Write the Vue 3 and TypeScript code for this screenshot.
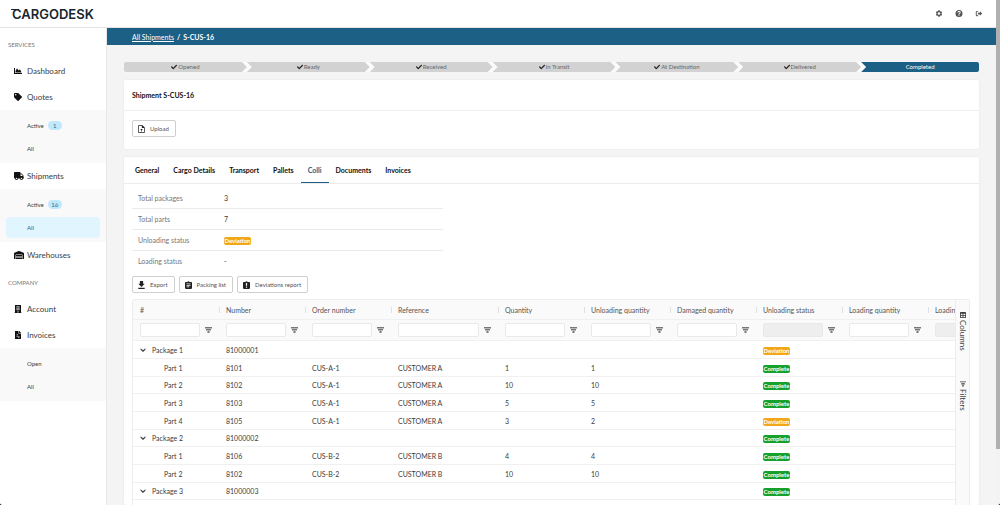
<script setup lang="ts">
import { h, ref } from 'vue'

interface Glyph {
  box: string
  d: string
}

const glyphs: Record<string, Glyph> = {
  chart: {
    box: '0 0 512 512',
    d: 'M500 384c6.6 0 12 5.4 12 12v40c0 6.6-5.4 12-12 12H12c-6.6 0-12-5.4-12-12V76c0-6.6 5.4-12 12-12h40c6.6 0 12 5.4 12 12v308h436zM372.7 159.5L288 216l-85.3-113.7c-5.1-6.8-15.5-6.3-19.9 1L96 248v104h384l-89.9-187.8c-3.2-6.5-11.4-8.7-17.4-4.7z',
  },
  tag: {
    box: '0 0 512 512',
    d: 'M0 252.118V48C0 21.49 21.49 0 48 0h204.118a48 48 0 0 1 33.941 14.059l211.882 211.882c18.745 18.745 18.745 49.137 0 67.882L293.823 497.941c-18.745 18.745-49.137 18.745-67.882 0L14.059 286.059A48 48 0 0 1 0 252.118zM112 64c-26.51 0-48 21.49-48 48s21.49 48 48 48 48-21.49 48-48-21.49-48-48-48z',
  },
  truck: {
    box: '0 0 640 512',
    d: 'M624 352h-16V243.9c0-12.7-5.1-24.9-14.1-33.9L494 110.1c-9-9-21.2-14.1-33.9-14.1H416V48c0-26.500-21.500-48-48-48H48C21.500 0 0 21.500 0 48v320c0 26.500 21.500 48 48 48h16c0 53 43 96 96 96s96-43 96-96h128c0 53 43 96 96 96s96-43 96-96h48c8.800 0 16-7.200 16-16v-32c0-8.800-7.200-16-16-16zM160 464c-26.500 0-48-21.500-48-48s21.500-48 48-48 48 21.500 48 48-21.500 48-48 48zm320 0c-26.500 0-48-21.500-48-48s21.500-48 48-48 48 21.500 48 48-21.500 48-48 48zm80-208H416V144h44.100l99.900 99.900V256z',
  },
  warehouse: {
    box: '0 0 640 512',
    d: 'M504 352H136a8 8 0 0 0-8 8v48a8 8 0 0 0 8 8h368a8 8 0 0 0 8-8v-48a8 8 0 0 0-8-8zm0 96H136a8 8 0 0 0-8 8v48a8 8 0 0 0 8 8h368a8 8 0 0 0 8-8v-48a8 8 0 0 0-8-8zm0-192H136a8 8 0 0 0-8 8v48a8 8 0 0 0 8 8h368a8 8 0 0 0 8-8v-48a8 8 0 0 0-8-8zm106-139L338 4a48 48 0 0 0-37 0L29 117a48 48 0 0 0-29 44v343a8 8 0 0 0 8 8h80a8 8 0 0 0 8-8V256c0-18 15-32 33-32h382c18 0 33 14 33 32v248a8 8 0 0 0 8 8h80a8 8 0 0 0 8-8V161a48 48 0 0 0-30-44z',
  },
  building: {
    box: '0 0 448 512',
    d: 'M436 480h-20V24c0-13-11-24-24-24H56C43 0 32 11 32 24v456H12c-7 0-12 5-12 12v20h448v-20c0-7-5-12-12-12zM128 76h80v64h-80zM240 76h80v64h-80zM128 176h80v64h-80zM240 176h80v64h-80zM128 276h80v64h-80zM240 276h80v64h-80zM192 400h64v80h-64z',
  },
  invoice: {
    box: '0 0 384 512',
    d: 'M224 136V0H24C11 0 0 11 0 24v464c0 13 11 24 24 24h336c13 0 24-11 24-24V160H248c-13 0-24-11-24-24zm160-14v6H256V0h6c6 0 12 3 17 7l98 98c4 5 7 11 7 17zM96 230h110v44H96zM96 330h192v44H96zM190 410h98v44h-98z',
  },
  check: {
    box: '0 0 512 512',
    d: 'M173.898 439.404l-166.400-166.400c-9.997-9.997-9.997-26.206 0-36.204l36.203-36.204c9.997-9.998 26.207-9.998 36.204 0L192 312.690 432.095 72.596c9.997-9.997 26.207-9.997 36.204 0l36.203 36.204c9.997 9.997 9.997 26.206 0 36.204l-294.400 294.401c-9.998 9.997-26.207 9.997-36.204-.001z',
  },
  settings: {
    box: '1 1 22 22',
    d: 'M12 1.500l3 .9.700 2.400 1.500.9 2.500-.6 2.100 3.700-1.800 1.900v2.600l1.800 1.900-2.100 3.700-2.500-.6-1.500.9-.7 2.400-3 .8-3-.8-.7-2.400-1.500-.9-2.500.6-2.100-3.700L4 13.300v-2.600L2.200 8.800l2.100-3.700 2.500.6 1.500-.9.700-2.400zM12 8a4 4 0 1 0 0 8 4 4 0 0 0 0-8z',
  },
  help: {
    box: '1 1 22 22',
    d: 'M12 1a11 11 0 1 0 0 22 11 11 0 0 0 0-22zm1.500 18h-3v-3h3zm2.700-7.600c-1.500 1.400-2.700 1.600-2.700 3.600h-3c0-3 1.500-3.600 2.700-4.800 1.700-1.600.8-3.200-1.200-3.200-1.300 0-2.200.9-2.200 2.200H6.900C6.900 6.200 9.100 4.200 12 4.200c4.600 0 6.800 4.300 4.200 7.200z',
  },
  logout: {
    box: '0 0 24 24',
    d: 'M9 3H5a4 4 0 0 0-4 4v10a4 4 0 0 0 4 4h4v-3H5.500a1.500 1.500 0 0 1-1.500-1.500v-9A1.500 1.500 0 0 1 5.500 6H9zM15 4l8 8-8 8v-5H8V9h7z',
  },
  upload: {
    box: '3 1 18 22',
    d: 'M14 1H5a2 2 0 0 0-2 2v18a2 2 0 0 0 2 2h14a2 2 0 0 0 2-2V8zm5 20H5V3h8v6h6zM8 15h3v4h2v-4h3l-4-4z',
  },
  download: { box: '4 2 16 20', d: 'M20 9h-4V2H8v7H4l8 8zM4 19v3h16v-3z' },
  list: {
    box: '3 1 18 20',
    d: 'M19 3h-4.200a3 3 0 0 0-5.600 0H5a2 2 0 0 0-2 2v14c0 1.100.9 2 2 2h14a2 2 0 0 0 2-2V5a2 2 0 0 0-2-2zm-5 14H7v-2h7zm3-4H7v-2h10zm0-4H7V7h10z',
  },
  late: {
    box: '3 1 18 20',
    d: 'M19 3h-4.200a3 3 0 0 0-5.600 0H5a2 2 0 0 0-2 2v14c0 1.100.9 2 2 2h14a2 2 0 0 0 2-2V5a2 2 0 0 0-2-2zm-5.500 15h-3v-3h3zm0-5h-3V6h3z',
  },
  funnel: { box: '0 0 14 12', d: 'M0 0h14v3H0zM2 4h10v3H2zM5 8h4v4H5z' },
  chevron: { box: '0 0 10 10', d: 'M1 2l4 3.500L9 2v2.500L5 8.500 1 4.500z' },
  columns: {
    box: '0 0 14 14',
    d: 'M2 0h10a2 2 0 0 1 2 2v10a2 2 0 0 1-2 2H2a2 2 0 0 1-2-2V2a2 2 0 0 1 2-2zM2 4v3h4V4zM8 4v3h4V4zM2 9v3h4V9zM8 9v3h4V9z',
  },
  lines: { box: '0 0 14 14', d: 'M0 1h14v2H0zM3 5h8v3H3zM5 10h4v3H5z' },
}

const Icon = (props: { name: string }) =>
  h('svg', { viewBox: glyphs[props.name].box, 'aria-hidden': 'true' }, [
    h('path', { d: glyphs[props.name].d, fill: 'currentColor', 'fill-rule': 'evenodd' }),
  ])
Icon.props = ['name']

interface SubLink {
  label: string
  count?: number
  current?: boolean
}
interface NavItem {
  label: string
  icon: string
  links?: SubLink[]
}

const sections: { title: string; items: NavItem[] }[] = [
  {
    title: 'SERVICES',
    items: [
      { label: 'Dashboard', icon: 'chart' },
      { label: 'Quotes', icon: 'tag', links: [{ label: 'Active', count: 1 }, { label: 'All' }] },
      {
        label: 'Shipments',
        icon: 'truck',
        links: [{ label: 'Active', count: 16 }, { label: 'All', current: true }],
      },
      { label: 'Warehouses', icon: 'warehouse' },
    ],
  },
  {
    title: 'COMPANY',
    items: [
      { label: 'Account', icon: 'building' },
      { label: 'Invoices', icon: 'invoice', links: [{ label: 'Open' }, { label: 'All' }] },
    ],
  },
]

const steps = ['Opened', 'Ready', 'Received', 'In Transit', 'At Destination', 'Delivered', 'Completed']
const tabs = ['General', 'Cargo Details', 'Transport', 'Pallets', 'Colli', 'Documents', 'Invoices']
const activeTab = ref('Colli')

const columns = [
  { label: '#' },
  { label: 'Number' },
  { label: 'Order number' },
  { label: 'Reference', wide: true },
  { label: 'Quantity' },
  { label: 'Unloading quantity' },
  { label: 'Damaged quantity' },
  { label: 'Unloading status', locked: true },
  { label: 'Loading quantity' },
  { label: 'Loading status', locked: true },
]

interface Row {
  name: string
  number: string
  order?: string
  reference?: string
  quantity?: number
  unloaded?: number
  status: 'Deviation' | 'Complete'
}

const rows: Row[] = [
  { name: 'Package 1', number: '81000001', status: 'Deviation' },
  { name: 'Part 1', number: '8101', order: 'CUS-A-1', reference: 'CUSTOMER A', quantity: 1, unloaded: 1, status: 'Complete' },
  { name: 'Part 2', number: '8102', order: 'CUS-A-1', reference: 'CUSTOMER A', quantity: 10, unloaded: 10, status: 'Complete' },
  { name: 'Part 3', number: '8103', order: 'CUS-A-1', reference: 'CUSTOMER A', quantity: 5, unloaded: 5, status: 'Complete' },
  { name: 'Part 4', number: '8105', order: 'CUS-A-1', reference: 'CUSTOMER A', quantity: 3, unloaded: 2, status: 'Deviation' },
  { name: 'Package 2', number: '81000002', status: 'Complete' },
  { name: 'Part 1', number: '8106', order: 'CUS-B-2', reference: 'CUSTOMER B', quantity: 4, unloaded: 4, status: 'Complete' },
  { name: 'Part 2', number: '8102', order: 'CUS-B-2', reference: 'CUSTOMER B', quantity: 10, unloaded: 10, status: 'Complete' },
  { name: 'Package 3', number: '81000003', status: 'Complete' },
]
</script>

<template>
  <div class="window">
    <div class="app">
      <header class="top">
        <a class="logo" href="#"><span class="logo-bar"></span>CARGODESK</a>
        <div class="tools">
          <button type="button" aria-label="Settings"><Icon name="settings" /></button>
          <button type="button" aria-label="Help"><Icon name="help" /></button>
          <button type="button" aria-label="Log out"><Icon name="logout" /></button>
        </div>
      </header>

      <div class="body">
        <nav class="side">
          <template v-for="section in sections" :key="section.title">
            <h2 class="side-title">{{ section.title }}</h2>
            <template v-for="item in section.items" :key="item.label">
              <a class="side-item" href="#">
                <span class="side-icon"><Icon :name="item.icon" :class="item.icon" /></span>{{ item.label }}
              </a>
              <div v-if="item.links" class="side-sub">
                <a
                  v-for="link in item.links"
                  :key="link.label"
                  href="#"
                  class="sub-link"
                  :class="{ current: link.current }"
                >
                  {{ link.label }}<span v-if="link.count" class="count">{{ link.count }}</span>
                </a>
              </div>
            </template>
          </template>
        </nav>

        <main class="main">
          <div class="crumbs">
            <a href="#">All Shipments</a><span>/</span><span>S-CUS-16</span>
          </div>

          <div class="content">
            <ol class="steps">
              <li v-for="(step, i) in steps" :key="step" :class="{ done: i < steps.length - 1 }">
                <Icon v-if="i < steps.length - 1" name="check" class="tick" />{{ step }}
              </li>
            </ol>

            <section class="card">
              <h1 class="card-title">Shipment S-CUS-16</h1>
              <div class="card-body">
                <button type="button" class="btn"><Icon name="upload" />Upload</button>
              </div>
            </section>

            <section class="card grow">
              <div class="tabs" role="tablist">
                <button
                  v-for="tab in tabs"
                  :key="tab"
                  type="button"
                  role="tab"
                  :aria-selected="tab === activeTab"
                  :class="{ active: tab === activeTab }"
                  @click="activeTab = tab"
                >
                  {{ tab }}
                </button>
              </div>

              <div class="panel">
                <dl class="facts">
                  <div><dt>Total packages</dt><dd>3</dd></div>
                  <div><dt>Total parts</dt><dd>7</dd></div>
                  <div><dt>Unloading status</dt><dd><span class="badge deviation">Deviation</span></dd></div>
                  <div><dt>Loading status</dt><dd>-</dd></div>
                </dl>

                <div class="actions">
                  <button type="button" class="btn"><Icon name="download" />Export</button>
                  <button type="button" class="btn"><Icon name="list" />Packing list</button>
                  <button type="button" class="btn"><Icon name="late" />Deviations report</button>
                </div>

                <div class="grid">
                  <div class="grid-view">
                    <table>
                      <colgroup>
                        <col v-for="col in columns" :key="col.label" :class="{ wide: col.wide }" />
                      </colgroup>
                      <thead>
                        <tr class="heads">
                          <th v-for="col in columns" :key="col.label" scope="col"><span>{{ col.label }}</span></th>
                        </tr>
                        <tr class="filters">
                          <td v-for="col in columns" :key="col.label">
                            <div class="filter">
                              <input type="text" :aria-label="`Filter ${col.label}`" :disabled="col.locked" />
                              <button type="button" :aria-label="`Filter options for ${col.label}`">
                                <Icon name="funnel" />
                              </button>
                            </div>
                          </td>
                        </tr>
                      </thead>
                      <tbody>
                        <tr v-for="(row, i) in rows" :key="i">
                          <td>
                            <button v-if="!row.order" type="button" class="toggle">
                              <Icon name="chevron" />{{ row.name }}
                            </button>
                            <span v-else class="part">{{ row.name }}</span>
                          </td>
                          <td>{{ row.number }}</td>
                          <td>{{ row.order }}</td>
                          <td>{{ row.reference }}</td>
                          <td>{{ row.quantity }}</td>
                          <td>{{ row.unloaded }}</td>
                          <td></td>
                          <td><span class="badge" :class="row.status.toLowerCase()">{{ row.status }}</span></td>
                          <td></td>
                          <td></td>
                        </tr>
                      </tbody>
                    </table>
                  </div>
                  <div class="grid-side">
                    <button type="button"><Icon name="columns" />Columns</button>
                    <button type="button"><Icon name="lines" />Filters</button>
                  </div>
                </div>
              </div>
            </section>
          </div>
        </main>
      </div>
    </div>
    <div class="scroll"><div class="thumb"></div></div>
  </div>
</template>

<style>
body {
  background: #1b1b1b;
}
</style>

<style scoped>
* {
  box-sizing: border-box;
}
.window {
  display: flex;
  height: 100vh;
  overflow: hidden;
  border-radius: 0 0 3px 3px;
  background: #f4f4f4;
  color: #3c3c3c;
  font: 7px/10px Lato, 'Liberation Sans', sans-serif;
}
button {
  display: flex;
  align-items: center;
  margin: 0;
  padding: 0;
  border: 0;
  background: none;
  color: inherit;
  font: inherit;
  white-space: nowrap;
}
a {
  color: inherit;
  text-decoration: none;
}
svg {
  display: block;
  flex: none;
}
.app {
  display: flex;
  flex: 1;
  flex-direction: column;
  min-width: 0;
}
.scroll {
  flex: none;
  width: 4px;
  background: #f3f3f3;
}
.thumb {
  height: 89%;
  background: #b0b0b0;
}

.top {
  display: flex;
  flex: none;
  align-items: center;
  justify-content: space-between;
  height: 28px;
  padding: 0 13px 0 12px;
  border-bottom: 1px solid #e4e4e4;
  background: #fff;
}
.logo {
  position: relative;
  color: #16262f;
  font: 600 13px/14px Inter, sans-serif;
}
.logo-bar {
  position: absolute;
  top: 2px;
  left: -1px;
  width: 8px;
  height: 1px;
  background: #16262f;
}
.tools {
  display: flex;
  gap: 12px;
  color: #555;
}
.tools svg {
  width: 8px;
  height: 7px;
}

.body {
  display: flex;
  flex: 1;
  min-height: 0;
}
.side {
  flex: none;
  width: 107px;
  padding-top: 2px;
  background: #fff;
  border-right: 1px solid #e8e8e8;
}
.side-title {
  margin: 2px 0 0;
  padding-left: 8px;
  color: #777;
  font-size: 6px;
  font-weight: 400;
  line-height: 26px;
}
.side-item {
  display: flex;
  align-items: center;
  height: 26px;
  padding-left: 14px;
  font-size: 8px;
}
.side-icon {
  width: 13px;
  color: #111;
}
.side-icon svg {
  width: 8px;
  height: 8px;
}
.side-icon .truck,
.side-icon .warehouse {
  width: 10px;
}
.side-sub {
  display: flex;
  flex-direction: column;
  gap: 2px;
  padding: 5px 6px 4px;
  background: #f9f9f9;
}
.sub-link {
  display: flex;
  align-items: center;
  gap: 4px;
  height: 21px;
  padding-left: 21px;
  border-radius: 4px;
  font-size: 6px;
}
.current {
  background: #e1f5fe;
  color: #1d6286;
}
.count {
  width: 14px;
  border-radius: 5px;
  background: #c0e8fc;
  color: #2f6b88;
  line-height: 9px;
  text-align: center;
}

.main {
  display: flex;
  flex: 1;
  flex-direction: column;
  min-width: 0;
}
.crumbs {
  display: flex;
  flex: none;
  align-items: center;
  gap: 3px;
  height: 17px;
  padding-left: 25px;
  background: #1c6085;
  color: #fff;
  font-weight: 700;
}
.crumbs a {
  font-weight: 400;
  text-decoration: underline;
}
.content {
  display: flex;
  flex: 1;
  flex-direction: column;
  gap: 8px;
  min-height: 0;
  padding: 17px 17px 0;
}
.steps {
  display: flex;
  flex: none;
  margin: 0;
  padding: 0;
  overflow: hidden;
  border-radius: 2px;
  background: #fbfbfb;
  list-style: none;
}
.steps li {
  display: flex;
  flex: 1 1 0;
  align-items: center;
  justify-content: center;
  height: 10px;
  background: #1c6085;
  color: #fff;
  font-size: 6px;
  clip-path: polygon(0 0, 100% 0, 100% 100%, 0 100%, 5px 50%);
}
.steps li.done {
  flex-basis: 5px;
  background: #d2d2d2;
  color: #666;
  clip-path: polygon(0 0, calc(100% - 5px) 0, 100% 50%, calc(100% - 5px) 100%, 0 100%, 5px 50%);
}
.steps li:first-child {
  clip-path: polygon(0 0, calc(100% - 5px) 0, 100% 50%, calc(100% - 5px) 100%, 0 100%);
}
.tick {
  width: 6px;
  height: 6px;
  margin-right: 1px;
  color: #222;
}

.card {
  flex: none;
  border-radius: 2px;
  background: #fff;
  box-shadow: 0 0 2px rgba(0, 0, 0, 0.08);
}
.grow {
  flex: 1;
  min-height: 0;
}
.card-title {
  margin: 0;
  padding: 0 8px;
  border-bottom: 1px solid #efefef;
  color: #111;
  font-size: 7px;
  line-height: 30px;
}
.card-body {
  padding: 9px 8px 12px;
}
.btn {
  gap: 5px;
  height: 17px;
  padding: 0 6px 0 5px;
  border: 1px solid #cfcfcf;
  border-radius: 2px;
  background: #fff;
  color: #555;
  font-size: 6px;
}
.btn svg {
  width: 7px;
  height: 8px;
  color: #222;
}
.tabs {
  display: flex;
  padding-left: 4px;
  border-bottom: 1px solid #ececec;
}
.tabs button {
  height: 26px;
  padding: 0 7px;
  border-bottom: 1px solid transparent;
  color: #111;
  font-weight: 700;
}
.tabs .active {
  border-color: #1c6085;
  color: #1c6085;
}
.panel {
  padding: 3px 9px 0 8px;
}
.facts {
  width: 311px;
  margin: 0;
}
.facts div {
  display: flex;
  align-items: center;
  height: 21px;
  padding-left: 6px;
}
.facts div + div {
  border-top: 1px solid #ebebeb;
}
.facts dt {
  width: 86px;
  color: #777;
}
.facts dd {
  margin: 0;
}
.badge {
  display: inline-block;
  width: 27px;
  border-radius: 2px;
  color: #fff;
  font-size: 6px;
  font-weight: 700;
  line-height: 8px;
  text-align: center;
  vertical-align: middle;
}
.deviation {
  background: #f0a818;
}
.complete {
  background: #16a02c;
}
.actions {
  display: flex;
  gap: 4px;
  padding: 5px 0 6px;
}

.grid {
  display: flex;
  border: 1px solid #ececec;
  border-radius: 2px 2px 0 0;
}
.grid-view {
  flex: 1;
  min-width: 0;
  height: 240px;
  overflow: hidden;
}
table {
  width: 881px;
  border-collapse: separate;
  border-spacing: 0;
  table-layout: fixed;
}
col {
  width: 86px;
}
col.wide {
  width: 107px;
}
th,
td {
  padding: 0 7px;
  border-bottom: 1px solid #f0f0f0;
  text-align: left;
  white-space: nowrap;
}
thead {
  background: #fafafa;
}
.heads {
  height: 20px;
}
.heads th {
  color: #555;
  font-weight: 400;
}
.heads th + th {
  background: linear-gradient(#e0e0e0, #e0e0e0) left center / 1px 6px no-repeat;
}
.filters {
  height: 21px;
}
.filter {
  display: flex;
  align-items: center;
  gap: 5px;
}
.filter input {
  flex: 1;
  min-width: 0;
  height: 14px;
  padding: 0 2px;
  border: 1px solid #e9e9e9;
  border-radius: 2px;
  background: #fff;
  font: inherit;
}
.filter input:disabled {
  background: #eee;
}
.filter svg {
  width: 7px;
  height: 6px;
  color: #777;
}
tbody tr {
  height: 18px;
}
tbody tr:nth-child(3n) {
  height: 17px;
}
.toggle {
  gap: 6px;
}
.toggle svg {
  width: 6px;
  height: 6px;
}
.part {
  padding-left: 24px;
}
.grid-side {
  display: flex;
  flex: none;
  flex-direction: column;
  gap: 30px;
  width: 14px;
  padding-top: 12px;
  border-left: 1px solid #ececec;
  background: #fafafa;
}
.grid-side button {
  gap: 2px;
  width: 13px;
  font-size: 8px;
  line-height: 13px;
  writing-mode: vertical-rl;
}
.grid-side svg {
  width: 6px;
  height: 6px;
}
</style>
